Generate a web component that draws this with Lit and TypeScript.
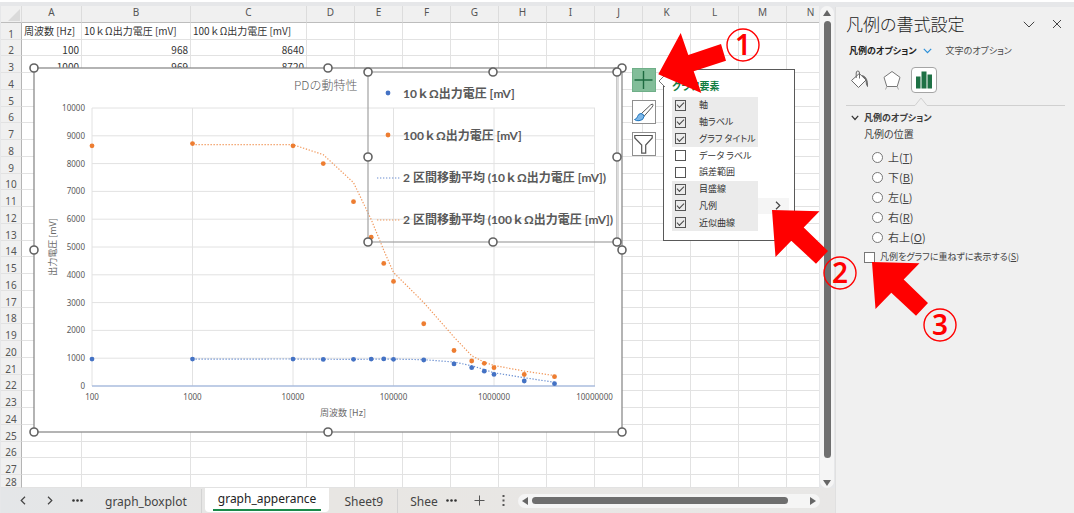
import { LitElement, html, svg, css } from "lit";
import { customElement } from "lit/decorators.js";
import { classMap } from "lit/directives/class-map.js";

const COLUMNS = "ABCDEFGHIJKLMN".split("");
const CELLS: string[][] = [
  ["周波数 [Hz]", "10ｋΩ出力電圧 [mV]", "100ｋΩ出力電圧 [mV]"],
  ["100", "968", "8640"],
  ["1000", "969", "8720"],
];

const FREQ = [100, 1e3, 1e4, 2e4, 4e4, 6e4, 8e4, 1e5, 2e5, 4e5, 6e5, 8e5, 1e6, 2e6, 4e6];
const LOW = [968, 969, 970, 955, 958, 970, 975, 960, 935, 795, 658, 532, 417, 180, 83];
const HIGH = [8640, 8720, 8640, 8000, 6630, 5350, 4410, 3760, 2240, 1277, 900, 815, 660, 414, 335];

const px = (f: number) => 58 + Math.log10(f / 100) * 100.5;
const py = (v: number) => 318 - v * 0.0278;
const movingAverage = (values: number[]) =>
  values
    .slice(1)
    .map((v, i) => `${px(FREQ[i + 1]).toFixed(1)},${py((v + values[i]) / 2).toFixed(1)}`)
    .join(" ");

const BLUE = "#4472c4";
const ORANGE = "#ed7d31";

@customElement("scatter-chart")
class ScatterChart extends LitElement {
  static styles = css`
    :host { display: block; }
    .canvas { display: block; width: 588px; height: 364px; overflow: visible; font-family: "Noto Sans", "Noto Sans CJK JP", sans-serif; }
    .frame { fill: #fff; stroke: #8c8c8c; stroke-width: 1.3; }
    .grid { stroke: #e2e2e2; stroke-width: 1; }
    .axis { stroke: #8eaadb; stroke-width: 1.2; }
    .tick { font-size: 8px; fill: #595959; }
    .center { text-anchor: middle; }
    .end { text-anchor: end; }
    .axis-title { font-size: 9px; fill: #6a6a6a; text-anchor: middle; font-family: "Noto Sans CJK JP", sans-serif; }
    .title { font-size: 12px; fill: #606060; font-weight: 300; font-family: "Noto Sans CJK JP", sans-serif; }
    .trend { fill: none; stroke-width: 1.2; stroke-dasharray: 1.3 1.7; opacity: .8; }
    .legend-frame { fill: none; stroke: #a2a2a2; stroke-width: 1.2; }
    .legend-edge { stroke: #dcdcdc; stroke-width: 2; }
    .legend-text { font-size: 12px; font-weight: 700; fill: #595959; font-family: "Lato", "Noto Sans CJK JP", sans-serif; }
    .handle { fill: #fff; stroke: #636363; stroke-width: 1.6; }
  `;

  private series(values: number[], color: string) {
    return svg`
      <polyline class="trend" stroke=${color} points=${movingAverage(values)}></polyline>
      ${values.map((v, i) => svg`<circle cx=${px(FREQ[i])} cy=${py(v)} r="2.4" fill=${color}></circle>`)}`;
  }

  render() {
    const handles = [
      [0, 0], [294, 0], [588, 0], [0, 182], [588, 182], [0, 364], [294, 364], [588, 364],
      [334, 4], [459, 4], [583, 4], [334, 89], [583, 89], [334, 174], [459, 174], [583, 174],
    ];
    const values = Array.from({ length: 11 }, (_, i) => i * 1000);
    const decades = [100, 1e3, 1e4, 1e5, 1e6, 1e7];
    return html`<svg class="canvas" viewBox="0 0 588 364" role="img" aria-label="PDの動特性">
      <rect class="frame" width="588" height="364"></rect>
      ${values.map((v) => svg`
        <line class="grid" x1="58" x2="561" y1=${py(v)} y2=${py(v)}></line>
        <text class="tick end" x="51" y=${py(v) + 3}>${v}</text>`)}
      ${decades.map((f) => svg`
        <line class="grid" x1=${px(f)} x2=${px(f)} y1=${py(10000)} y2=${py(0)}></line>
        <text class="tick center" x=${px(f)} y="332">${f}</text>`)}
      <line class="axis" x1="58" x2="561" y1="318" y2="318"></line>
      <text class="title" x="260" y="22">PDの動特性</text>
      <text class="axis-title" x="309" y="348">周波数 [Hz]</text>
      <text class="axis-title" transform="translate(22 179) rotate(-90)">出力電圧 [mV]</text>
      ${this.series(LOW, BLUE)}
      ${this.series(HIGH, ORANGE)}
      <rect class="legend-frame" x="334" y="4" width="249" height="170"></rect>
      <line class="legend-edge" x1="584" x2="584" y1="5" y2="174"></line>
      <circle cx="354" cy="25" r="2.4" fill=${BLUE}></circle>
      <circle cx="354" cy="67" r="2.4" fill=${ORANGE}></circle>
      <line class="trend" x1="343" x2="367" y1="110" y2="110" stroke=${BLUE}></line>
      <line class="trend" x1="343" x2="367" y1="152" y2="152" stroke=${ORANGE}></line>
      <text class="legend-text" x="369" y="30">10ｋΩ出力電圧 [mV]</text>
      <text class="legend-text" x="369" y="72">100ｋΩ出力電圧 [mV]</text>
      <text class="legend-text" x="369" y="114">2 区間移動平均 (10ｋΩ出力電圧 [mV])</text>
      <text class="legend-text" x="369" y="156">2 区間移動平均 (100ｋΩ出力電圧 [mV])</text>
      ${handles.map(([x, y]) => svg`<circle class="handle" cx=${x} cy=${y} r="4"></circle>`)}
    </svg>`;
  }
}

@customElement("chart-tools")
class ChartTools extends LitElement {
  static styles = css`
    :host { display: flex; align-items: flex-start; gap: 7px; font: 9px/16px "Noto Sans CJK JP", sans-serif; font-feature-settings: "palt"; color: #333; }
    .buttons { display: grid; gap: 8px; }
    .tool { display: block; box-sizing: border-box; width: 24px; height: 24px; padding: 0; border: 1px solid #8f8f8f; background: #fff; }
    .tool.on { background: #82bd99; border-color: #6faf88; }
    .tool svg { display: block; width: 22px; height: 22px; }
    .flyout { position: relative; box-sizing: border-box; width: 132px; margin-top: 1px; padding: 8px 5px 9px 8px; border: 1px solid #595959; background: #fff; }
    .beak { position: absolute; left: -6px; top: 5px; width: 7px; height: 12px; }
    .heading { margin: 0 0 3px; font-size: 10px; line-height: 16px; font-weight: 700; color: #107c41; }
    .list { display: grid; grid-auto-rows: 1fr; height: 134px; margin: 0; padding: 0; list-style: none; }
    .row { display: grid; grid-template-columns: 86px 1fr; }
    .option { display: flex; align-items: center; padding-left: 3px; gap: 13px; white-space: pre; }
    .on .option { background: #ebebeb; }
    .box { appearance: none; display: grid; place-items: center; box-sizing: border-box; width: 11px; height: 11px; margin: 0; border: 1px solid #555; background: #fff; flex: none; }
    .box:checked { background: transparent; }
    .box:checked::before { content: ""; width: 6px; height: 3px; border: solid #444; border-width: 0 0 1px 1px; transform: translateY(-1px) rotate(-45deg); }
    .more { display: grid; place-items: center; padding: 0; border: 0; background: #f5f5f5; }
    .more svg { width: 6px; height: 9px; margin-left: 8px; }
  `;

  render() {
    const options: [string, boolean][] = [
      ["軸", true], ["軸ラベル", true], ["グラフ タイトル", true], ["データ ラベル", false],
      ["誤差範囲", false], ["目盛線", true], ["凡例", true], ["近似曲線", true],
    ];
    return html`
      <div class="buttons">
        <button class="tool on" aria-label="グラフ要素">
          <svg viewBox="0 0 22 22"><path d="M10.500 2v18M1.500 11h18" stroke="#1d6b40" stroke-width="1.400" fill="none"/></svg>
        </button>
        <button class="tool" aria-label="グラフ スタイル">
          <svg viewBox="0 0 22 22" fill="none">
            <path d="M8.500 12.500L17.500 4Q19.500 2.500 20 3.500Q20.300 4.500 19 6.200L11 15.300Z" fill="#fff" stroke="#555" stroke-width="1"/>
            <path d="M1.500 18.500Q4 18 4.500 15.500Q5.500 12.500 8 12.500Q11 13 11 15.500Q10.500 19.500 6 19.700Q3 20 1.500 18.500Z" fill="#7db7e8" stroke="#1f75bd" stroke-width="1"/>
          </svg>
        </button>
        <button class="tool" aria-label="グラフ フィルター">
          <svg viewBox="0 0 22 22"><path d="M1.800 2.500H19.200V5L12.700 12V20.200H8.700V12L1.800 5Z" fill="#fff" stroke="#555" stroke-width="1.200"/></svg>
        </button>
      </div>
      <div class="flyout">
        <svg class="beak" viewBox="0 0 7 12"><path d="M7 0L1 6L7 12" fill="#fff" stroke="#777"/></svg>
        <h3 class="heading">グラフ要素</h3>
        <ul class="list">
          ${options.map(([name, on]) => html`
            <li class=${classMap({ row: true, on })}>
              <label class="option"><input class="box" type="checkbox" .checked=${on} />${name}</label>
              ${name === "凡例"
                ? html`<button class="more" aria-label="凡例の詳細"><svg viewBox="0 0 6 9"><path d="M1 .8L4.800 4.500L1 8.200" fill="none" stroke="#444" stroke-width="1.200"/></svg></button>`
                : ""}
            </li>`)}
        </ul>
      </div>`;
  }
}

@customElement("step-marker")
class StepMarker extends LitElement {
  static properties = { step: { type: Number } };
  declare step: number;
  static styles = css`
    :host { display: block; pointer-events: none; }
    .art { display: block; width: 90px; height: 84px; overflow: visible; }
    .arrow { fill: #f00; }
    .ring { fill: none; stroke: #f00; stroke-width: 1.4; }
    .digit { fill: #f00; font: 600 28px "Noto Sans", sans-serif; text-anchor: middle; }
  `;

  render() {
    const first = this.step === 1;
    const [cx, cy] = first ? [85, 16] : [68, 63];
    return html`<svg class="art" viewBox="0 0 90 84">
      <polygon class="arrow" points=${first
        ? "0.300,45.300 22.700,4 30.300,26 63,15 68,31.700 35.700,42.300 43.300,64"
        : "0,0 47.500,1.300 31.700,17.500 56,41 44,53.700 19.300,30.700 3.500,47"}></polygon>
      <circle class="ring" cx=${cx} cy=${cy} r="16"></circle>
      <text class="digit" x=${cx} y=${cy + 10}>${this.step}</text>
    </svg>`;
  }
}

@customElement("format-pane")
class FormatPane extends LitElement {
  static styles = css`
    :host { display: block; position: relative; box-sizing: border-box; padding: 4px 9px 0 10px; background: #f0f0f0; border-left: 1px solid #e0e0e0; color: #3b3b3b; font: 9px/16px "Noto Sans CJK JP", sans-serif; font-feature-settings: "palt"; }
    .bar { display: flex; align-items: center; }
    .title { flex: 1; margin: 0; font-size: 17px; line-height: 26px; font-weight: 300; color: #222; }
    .icon { display: block; padding: 0; border: 0; background: none; }
    .icon svg { display: block; }
    .actions { display: flex; align-items: center; gap: 17px; padding-right: 3px; }
    .tabs { display: flex; align-items: center; gap: 14px; padding: 6px 0 0 3px; }
    .tab { display: flex; align-items: center; gap: 6px; padding: 0; border: 0; background: none; color: #4a4a4a; font: inherit; font-feature-settings: inherit; }
    .strong { color: #222; font-weight: 700; }
    .kinds { display: flex; align-items: center; gap: 6px; padding: 8px 0 0 1px; }
    .kind { display: grid; place-items: center; box-sizing: border-box; width: 26px; height: 26px; padding: 0; border: 1px solid transparent; border-radius: 4px; background: none; }
    .kind.on { background: #fff; border-color: #a5a5a5; }
    .rule { display: flex; margin-top: 4px; }
    .rule svg { display: block; width: 12px; height: 9px; }
    .line { border-bottom: 1px solid #d0d0d0; }
    .before { width: 69px; }
    .after { flex: 1; }
    .section { display: flex; align-items: center; gap: 5px; margin: 4px 0 0 5px; font-size: 9px; line-height: 16px; }
    .group { margin: 0; padding: 0; border: 0; }
    .legend { padding: 0; margin: 6px 0 5px 18px; font-size: 10px; }
    .choice { display: flex; align-items: center; gap: 5px; height: 20px; margin-left: 26px; font-size: 11px; color: #444; }
    .choice.wide { margin-left: 18px; font-size: 9px; }
    .radio, .check { appearance: none; box-sizing: border-box; width: 11px; height: 11px; margin: 0; border: 1px solid #777; background: #fff; flex: none; }
    .radio { border-radius: 50%; }
    .marker { position: absolute; left: 36px; top: 255px; }
  `;

  render() {
    const places = [["上", "T"], ["下", "B"], ["左", "L"], ["右", "R"], ["右上", "O"]];
    return html`
      <div class="bar">
        <h2 class="title">凡例の書式設定</h2>
        <div class="actions">
          <button class="icon" aria-label="作業ウィンドウ オプション"><svg width="12" height="7" viewBox="0 0 12 7"><path d="M.8.800L6 6L11.200.800" fill="none" stroke="#444"/></svg></button>
          <button class="icon" aria-label="閉じる"><svg width="10" height="10" viewBox="0 0 10 10"><path d="M1 1L9 9M9 1L1 9" stroke="#444" fill="none"/></svg></button>
        </div>
      </div>
      <div class="tabs">
        <button class="tab strong">凡例のオプション<svg width="9" height="6" viewBox="0 0 9 6"><path d="M.8.800L4.500 4.600L8.200.800" fill="none" stroke="#2b8fd8" stroke-width="1.200"/></svg></button>
        <button class="tab">文字のオプション</button>
      </div>
      <div class="kinds">
        <button class="kind" aria-label="塗りつぶしと線">
          <svg width="20" height="20" viewBox="0 0 20 20" fill="none" stroke="#6a6a6a">
            <path d="M9.300 3.500L16 10L8.500 17.500L1.500 10.500Z" fill="#fff"/>
            <path d="M6.200 8V3Q6.200 1 7.800 1Q9.500 1 9.500 3V8.500"/>
            <path d="M12.500 5.500Q18 7.500 17.500 16.500Q16 14 16 10Z" fill="#6a6a6a"/>
          </svg>
        </button>
        <button class="kind" aria-label="効果">
          <svg width="20" height="20" viewBox="0 0 20 20" fill="none" stroke="#777">
            <path d="M10 1.500L18 7.300L15.200 16.500H4.800L2 7.300Z" fill="#fff"/>
            <path d="M3.500 19.500L4.800 16.500M16.500 19.500L15.200 16.500" stroke="#aaa"/>
          </svg>
        </button>
        <button class="kind on" aria-label="凡例のオプション">
          <svg width="18" height="18" viewBox="0 0 18 18" fill="#1e7145"><path d="M1 5.500H5.500V17.500H1ZM6.500.500H11.500V17.500H6.500ZM12.500 3.500H17V17.500H12.500Z"/></svg>
        </button>
      </div>
      <div class="rule">
        <span class="line before"></span>
        <svg viewBox="0 0 12 9"><path d="M0 8.500L6 1L12 8.500" fill="none" stroke="#d0d0d0"/></svg>
        <span class="line after"></span>
      </div>
      <h3 class="section"><svg width="8" height="6" viewBox="0 0 8 6"><path d="M.8.800L4 4.500L7.200.800" fill="none" stroke="#333" stroke-width="1.200"/></svg>凡例のオプション</h3>
      <fieldset class="group">
        <legend class="legend">凡例の位置</legend>
        ${places.map(([name, key]) => html`
          <label class="choice"><input class="radio" type="radio" name="place" /><span>${name}(<u>${key}</u>)</span></label>`)}
      </fieldset>
      <label class="choice wide"><input class="check" type="checkbox" /><span>凡例をグラフに重ねずに表示する(<u>S</u>)</span></label>
      <step-marker class="marker" .step=${3}></step-marker>`;
  }
}

@customElement("app-root")
class AppRoot extends LitElement {
  static styles = css`
    :host { display: flex; box-sizing: border-box; height: 100vh; overflow: hidden; padding-left: 1px; border-top: 2px solid #fff; background: #e6e7e9; font: 10px/16px "Noto Sans", "Noto Sans CJK JP", sans-serif; color: #444; }
    .book { position: relative; z-index: 1; flex: 1; min-width: 0; display: flex; flex-direction: column; padding-top: 4px; }
    .view { flex: 1; min-height: 0; display: flex; }
    .sheet { position: relative; flex: 1; min-width: 0; overflow: hidden; background: #fff; }
    .cells { display: grid; height: 100%; border-spacing: 0; grid-template-rows: 17px repeat(27, 1fr) 13px; }
    .cells thead, .cells tbody { display: contents; }
    .line { display: grid; min-height: 0; grid-template-rows: minmax(0, 1fr); grid-template-columns: 21px 60px 109px 116px repeat(11, 48px); }
    .head, .num { box-sizing: border-box; min-height: 0; padding: 0; font-weight: 400; background: #f0f0f0; color: #555; text-align: center; }
    .head { border-right: 1px solid #dcdcdc; border-bottom: 1px solid #bdbdbd; line-height: 13px; }
    .corner { display: flex; justify-content: flex-end; align-items: flex-end; padding: 0 1px 1px 0; }
    .corner svg { display: block; }
    .num { display: flex; align-items: flex-end; justify-content: center; border-right: 1px solid #b4b4b4; border-bottom: 1px solid #e2e2e2; line-height: 10px; }
    .cell { display: flex; align-items: center; box-sizing: border-box; min-height: 0; padding: 0 2px; border-right: 1px solid #e2e2e2; border-bottom: 1px solid #e2e2e2; font: 10px/12px "Noto Sans CJK JP", sans-serif; white-space: nowrap; color: #333; }
    .value { align-items: flex-end; justify-content: flex-end; line-height: 10px; }
    .chart { position: absolute; left: 33px; top: 62px; }
    .tools { position: absolute; left: 631px; top: 62px; }
    .one { position: absolute; left: 657px; top: 27px; }
    .two { position: absolute; left: 771px; top: 208px; }
    .vbar { display: flex; flex-direction: column; align-items: center; gap: 5px; width: 14px; margin: 0 1px; padding: 4px 0 2px; border-radius: 7px; background: #f5f5f5; }
    .vthumb { width: 7px; flex: 1; margin-bottom: 17px; border-radius: 4px; background: #6e6e6e; }
    .arrow { display: block; fill: #666; }
    .strip { display: flex; align-items: center; height: 25px; background: linear-gradient(90deg, #e4e6e8, #e8e6e3 40%, #e8e7e6); font-size: 12px; }
    .plain { display: grid; place-items: center; padding: 0; border: 0; background: none; color: #444; font: inherit; }
    .nav { width: 86px; display: grid; grid-template-columns: 16px 16px 16px; justify-content: center; gap: 11px; padding-left: 6px; }
    .tab { height: 24px; padding: 2px 14px 0 12px; border-right: 1px solid #d3d3d3; }
    .tab.current { align-self: stretch; height: 24px; margin: 0 3px; padding: 0 8px; border: 0; border-radius: 0 0 4px 4px; background: #fff; color: #222; }
    .name { padding: 0 5px; line-height: 20px; border-bottom: 2px solid #1a8a4a; }
    .tab.cut { padding: 2px 4px 0 12px; border: 0; }
    .extra { display: flex; align-items: center; gap: 17px; padding: 0 13px 0 4px; }
    .hbar { flex: 1; display: flex; align-items: center; gap: 4px; height: 14px; margin-right: 15px; padding: 0 4px; border-radius: 7px; background: #f5f5f5; }
    .hthumb { flex: 1; height: 7px; margin-right: 18px; border-radius: 4px; background: #6e6e6e; }
    .pane { flex: none; width: 239px; margin-top: 5px; }
  `;

  private dots(vertical = false) {
    return vertical
      ? html`<svg width="3" height="11" viewBox="0 0 3 11" fill="#555"><path d="M.5 0H2.500V2H.5ZM.5 4.500H2.500V6.500H.5ZM.5 9H2.500V11H.5Z"/></svg>`
      : html`<svg width="11" height="3" viewBox="0 0 11 3" fill="#333"><circle cx="1.500" cy="1.500" r="1.300"/><circle cx="5.500" cy="1.500" r="1.300"/><circle cx="9.500" cy="1.500" r="1.300"/></svg>`;
  }

  render() {
    return html`
      <main class="book">
        <div class="view">
          <div class="sheet">
            <table class="cells">
              <thead>
                <tr class="line">
                  <th class="head corner"><svg width="12" height="12" viewBox="0 0 12 12"><path d="M12 0V12H0Z" fill="#dadada"/></svg></th>
                  ${COLUMNS.map((c) => html`<th class="head">${c}</th>`)}
                </tr>
              </thead>
              <tbody>
                ${Array.from({ length: 28 }, (_, r) => html`
                  <tr class="line">
                    <th class="num">${r + 1}</th>
                    ${COLUMNS.map((_c, i) => html`<td class=${classMap({ cell: true, value: r > 0 })}>${CELLS[r]?.[i] ?? ""}</td>`)}
                  </tr>`)}
              </tbody>
            </table>
            <scatter-chart class="chart"></scatter-chart>
            <chart-tools class="tools"></chart-tools>
          </div>
          <div class="vbar">
            <svg class="arrow" width="8" height="6" viewBox="0 0 8 6"><path d="M4 0L8 6H0Z"/></svg>
            <div class="vthumb"></div>
            <svg class="arrow" width="8" height="6" viewBox="0 0 8 6"><path d="M0 0H8L4 6Z"/></svg>
          </div>
        </div>
        <nav class="strip">
          <div class="nav">
            <button class="plain" aria-label="前のシート"><svg width="6" height="9" viewBox="0 0 6 9"><path d="M5 .8L1.200 4.500L5 8.200" fill="none" stroke="#444" stroke-width="1.200"/></svg></button>
            <button class="plain" aria-label="次のシート"><svg width="6" height="9" viewBox="0 0 6 9"><path d="M1 .8L4.800 4.500L1 8.200" fill="none" stroke="#444" stroke-width="1.200"/></svg></button>
            <button class="plain" aria-label="シート一覧">${this.dots()}</button>
          </div>
          <button class="plain tab">graph_boxplot</button>
          <button class="plain tab current"><span class="name">graph_apperance</span></button>
          <button class="plain tab">Sheet9</button>
          <button class="plain tab cut">Shee</button>
          <div class="extra">
            <button class="plain" aria-label="他のシート">${this.dots()}</button>
            <button class="plain" aria-label="新しいシート"><svg width="11" height="11" viewBox="0 0 11 11"><path d="M5.500.500V10.500M.5 5.500H10.500" stroke="#555" fill="none"/></svg></button>
            <span class="plain">${this.dots(true)}</span>
          </div>
          <div class="hbar">
            <svg class="arrow" width="6" height="8" viewBox="0 0 6 8"><path d="M6 0V8L0 4Z"/></svg>
            <div class="hthumb"></div>
            <svg class="arrow" width="6" height="8" viewBox="0 0 6 8"><path d="M0 0L6 4L0 8Z"/></svg>
          </div>
        </nav>
        <step-marker class="one" .step=${1}></step-marker>
        <step-marker class="two" .step=${2}></step-marker>
      </main>
      <format-pane class="pane"></format-pane>`;
  }
}
